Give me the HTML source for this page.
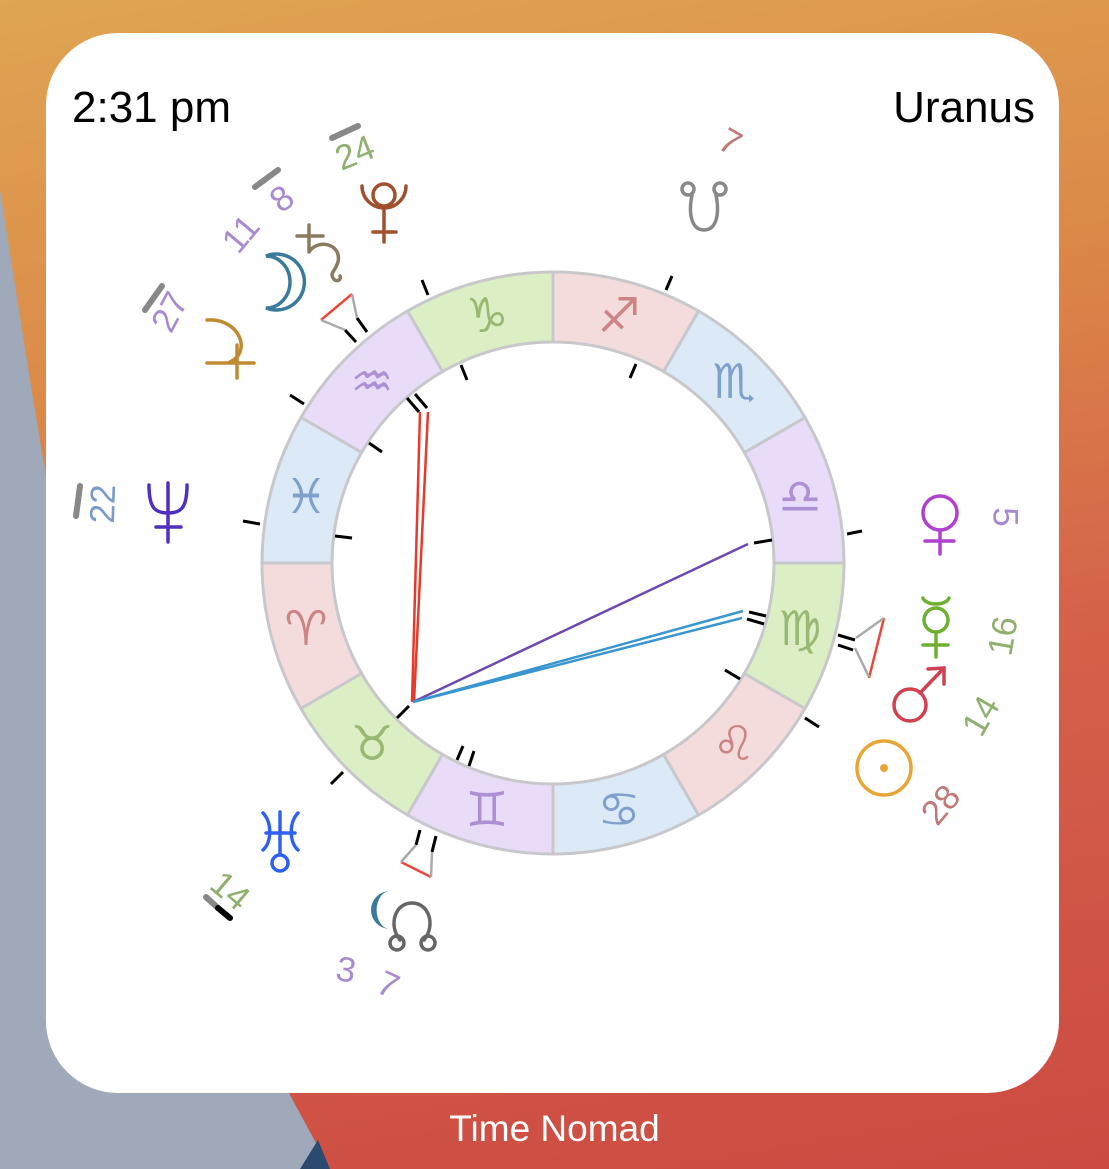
<!DOCTYPE html>
<html><head><meta charset="utf-8"><style>
html,body{margin:0;padding:0;width:1109px;height:1169px;overflow:hidden}
body{background:linear-gradient(170deg,#dfa552 0%,#dc8a48 30%,#d4614a 60%,#cc4a42 100%);position:relative;font-family:"Liberation Sans",sans-serif}
.card{position:absolute;left:46px;top:33px;width:1013px;height:1060px;background:#fff;border-radius:72px}
.lbl{position:absolute;font-size:44px;color:#000;top:83px}
.foot{position:absolute;top:1108px;left:0;width:1109px;text-align:center;color:#fff;font-size:37px}
svg{position:absolute;left:0;top:0}
</style></head><body>
<svg width="1109" height="1169"><polygon points="0,190 30,380 60,560 200,900 290,1095 330,1169 0,1169" fill="#a0a9b9"/><polygon points="318,1140 330,1169 300,1169" fill="#2c4a70"/></svg>
<div class="card"></div>
<div class="lbl" style="left:72px">2:31 pm</div>
<div class="lbl" style="right:74px">Uranus</div>
<div class="foot">Time Nomad</div>
<svg width="1109" height="1169" font-family="DejaVu Sans, sans-serif">
<g stroke="#c8c8cc" stroke-width="3">
<path d="M844,563 A291,291 0 0 0 805,417.5 L744.4,452.5 A221,221 0 0 1 774,563Z" fill="#e8dcf8"/>
<path d="M805,417.5 A291,291 0 0 0 698.5,311 L663.5,371.6 A221,221 0 0 1 744.4,452.5Z" fill="#dceaf8"/>
<path d="M698.5,311 A291,291 0 0 0 553,272 L553,342 A221,221 0 0 1 663.5,371.6Z" fill="#f5dcdc"/>
<path d="M553,272 A291,291 0 0 0 407.5,311 L442.5,371.6 A221,221 0 0 1 553,342Z" fill="#dcefc4"/>
<path d="M407.5,311 A291,291 0 0 0 301,417.5 L361.6,452.5 A221,221 0 0 1 442.5,371.6Z" fill="#e8dcf8"/>
<path d="M301,417.5 A291,291 0 0 0 262,563 L332,563 A221,221 0 0 1 361.6,452.5Z" fill="#dceaf8"/>
<path d="M262,563 A291,291 0 0 0 301,708.5 L361.6,673.5 A221,221 0 0 1 332,563Z" fill="#f5dcdc"/>
<path d="M301,708.5 A291,291 0 0 0 407.5,815 L442.5,754.4 A221,221 0 0 1 361.6,673.5Z" fill="#dcefc4"/>
<path d="M407.5,815 A291,291 0 0 0 553,854 L553,784 A221,221 0 0 1 442.5,754.4Z" fill="#e8dcf8"/>
<path d="M553,854 A291,291 0 0 0 698.5,815 L663.5,754.4 A221,221 0 0 1 553,784Z" fill="#dceaf8"/>
<path d="M698.5,815 A291,291 0 0 0 805,708.5 L744.4,673.5 A221,221 0 0 1 663.5,754.4Z" fill="#f5dcdc"/>
<path d="M805,708.5 A291,291 0 0 0 844,563 L774,563 A221,221 0 0 1 744.4,673.5Z" fill="#dcefc4"/>
</g>
<g font-size="48" text-anchor="middle" dominant-baseline="central">
<text x="800" y="497" fill="#ad90d4">♎&#xFE0E;</text>
<text x="734" y="382" fill="#80a0cc">♏&#xFE0E;</text>
<text x="619" y="316" fill="#cc8484">♐&#xFE0E;</text>
<text x="487" y="316" fill="#98b874">♑&#xFE0E;</text>
<text x="372" y="382" fill="#ad90d4">♒&#xFE0E;</text>
<text x="306" y="497" fill="#80a0cc">♓&#xFE0E;</text>
<text x="306" y="629" fill="#cc8484">♈&#xFE0E;</text>
<text x="372" y="744" fill="#98b874">♉&#xFE0E;</text>
<text x="487" y="810" fill="#ad90d4">♊&#xFE0E;</text>
<text x="619" y="810" fill="#80a0cc">♋&#xFE0E;</text>
<text x="734" y="744" fill="#cc8484">♌&#xFE0E;</text>
<text x="800" y="629" fill="#98b874">♍&#xFE0E;</text>
</g>
<g stroke="#000" stroke-width="3">
<line x1="422" y1="280" x2="428" y2="295"/><line x1="666" y1="290" x2="672" y2="276"/>
<line x1="847" y1="534" x2="862" y2="531"/><line x1="805" y1="718" x2="819" y2="727"/>
<line x1="331" y1="784" x2="343" y2="772"/><line x1="243" y1="521" x2="260" y2="524"/>
<line x1="290" y1="395" x2="304" y2="404"/>
<line x1="630" y1="378" x2="636" y2="364"/><line x1="461" y1="365" x2="467" y2="380"/>
<line x1="369" y1="443" x2="382" y2="452"/><line x1="335" y1="536" x2="352" y2="538"/>
<line x1="754" y1="543" x2="772" y2="540"/><line x1="725" y1="670" x2="740" y2="679"/>
<line x1="397" y1="718" x2="409" y2="706"/>
<line x1="457" y1="760" x2="463" y2="746"/><line x1="469" y1="766" x2="474" y2="751"/>
<line x1="407" y1="398" x2="419" y2="412"/><line x1="415" y1="394" x2="427" y2="408"/>
<line x1="749" y1="612" x2="766" y2="616"/><line x1="747" y1="619" x2="764" y2="624"/>
<line x1="838" y1="635" x2="855" y2="640"/><line x1="838" y1="645" x2="853" y2="650"/>
<line x1="345" y1="330" x2="356" y2="342"/><line x1="357" y1="318" x2="367" y2="332"/>
<line x1="420" y1="830" x2="416" y2="845"/><line x1="436" y1="836" x2="432" y2="852"/>
</g>
<g stroke-width="2.5" fill="none">
<path d="M420,412 L412,702 M428,412 L414,702" stroke="#e83a2a"/>
<path d="M413,702 L748,544" stroke="#6e4ab0"/>
<path d="M413,702 L743,611 M413,702 L742,618" stroke="#3a96d0"/>
<path d="M321,320 L352,294" stroke="#e84a3a"/><path d="M352,294 L357,318 M321,320 L345,330" stroke="#aaa"/>
<path d="M884,618 L869,678" stroke="#e84a3a"/><path d="M884,618 L856,638 M855,648 L869,677" stroke="#aaa"/>
<path d="M401,862 L431,877" stroke="#e84a3a"/><path d="M416,845 L401,862 M432,852 L431,877" stroke="#aaa"/>
</g>
<g stroke-width="6" stroke-linecap="round">
<line x1="332" y1="138" x2="358" y2="126" stroke="#888"/>
<line x1="255" y1="187" x2="278" y2="170" stroke="#888"/>
<line x1="145" y1="310" x2="162" y2="286" stroke="#888"/>
<line x1="76" y1="516" x2="80" y2="486" stroke="#888"/>
<line x1="206" y1="897" x2="218" y2="908" stroke="#888"/><line x1="218" y1="908" x2="230" y2="918" stroke="#000"/>
</g>
<g fill="none" stroke-width="3.5" stroke-linecap="round">
<path d="M373,195 a11,11 0 1 0 22,0 a11,11 0 1 0 -22,0 M362,186 A22,22 0 0 0 406,186 M384,208 L384,242 M373,232 L396,232" stroke="#a0502e"/>
<path d="M309,225 L309,252 M297,236 L323,236 M309,252 C318,238 342,244 338,262 C335,272 330,272 333,278 C336,283 342,280 340,276" stroke="#8a7a60"/>
<path d="M266,256 A28,28 0 1 1 266,308 A24,26 0 0 0 266,256 Z" stroke="#3a7a9a"/>
<path d="M207,320 C240,318 252,352 230,362 M207,363 L254,363 M237,345 L237,378" stroke="#c08a30"/>
<path d="M149,485 C149,508 155,513 168,513 C181,513 187,508 187,485 M168,483 L168,542 M156,527 L181,527" stroke="#5030c0"/>
<path d="M263,813 C272,822 272,842 263,850 M298,813 C289,822 289,842 298,850 M280,812 L280,855 M266,833 L295,833" stroke="#3060f0"/>
<circle cx="280" cy="863" r="8" stroke="#3060f0"/>
<path d="M400,940 C388,925 395,903 412,903 C429,903 436,925 424,940" stroke="#666"/>
<circle cx="397" cy="943" r="7" stroke="#666"/><circle cx="428" cy="943" r="7" stroke="#666"/>
<path d="M692,195 C688,215 692,230 704,230 C716,230 720,215 716,195" stroke="#888"/>
<circle cx="688" cy="189" r="6" stroke="#888"/><circle cx="720" cy="189" r="6" stroke="#888"/>
<circle cx="940" cy="513" r="17" stroke="#b040d0"/><path d="M940,530 L940,554 M925,541 L954,541" stroke="#b040d0"/>
<circle cx="936" cy="620" r="12" stroke="#70b030"/><path d="M923,598 C926,606 946,606 949,598 M936,632 L936,657 M923,645 L948,645" stroke="#70b030"/>
<circle cx="910" cy="705" r="16" stroke="#d04050"/><path d="M920,693 L944,668 M928,669 L944,668 L944,684" stroke="#d04050"/>
<circle cx="884" cy="768" r="27" stroke="#e8a535"/>
</g>
<circle cx="884" cy="768" r="4" fill="#e8a535"/>
<path d="M390,891 A19,19 0 1 0 390,929 A12,17 0 0 1 390,891Z" fill="#3a7a9a"/>
<g font-family="Liberation Sans, sans-serif" font-size="35" text-anchor="middle" dominant-baseline="central">
<text transform="translate(355,153) rotate(-22)" fill="#90b070">24</text>
<text transform="translate(282,199) rotate(-38)" fill="#a88ad0">8</text>
<text transform="translate(241,234) rotate(-50)" fill="#a88ad0">11</text>
<text transform="translate(170,312) rotate(-62)" fill="#a88ad0">27</text>
<text transform="translate(103,504) rotate(-88)" fill="#7a9ac8">22</text>
<text transform="translate(230,891) rotate(40)" fill="#90b070">14</text>
<text transform="translate(346,970) rotate(10)" fill="#a88ad0">3</text>
<text transform="translate(388,985) rotate(25)" fill="#a88ad0">7</text>
<text transform="translate(730,142) rotate(30)" fill="#c07a78">7</text>
<text transform="translate(1005,517) rotate(90)" fill="#a88ad0">5</text>
<text transform="translate(1003,636) rotate(-80)" fill="#90b070">16</text>
<text transform="translate(981,716) rotate(-60)" fill="#90b070">14</text>
<text transform="translate(941,805) rotate(-50)" fill="#c07a78">28</text>
</g>
</svg>
</body></html>
